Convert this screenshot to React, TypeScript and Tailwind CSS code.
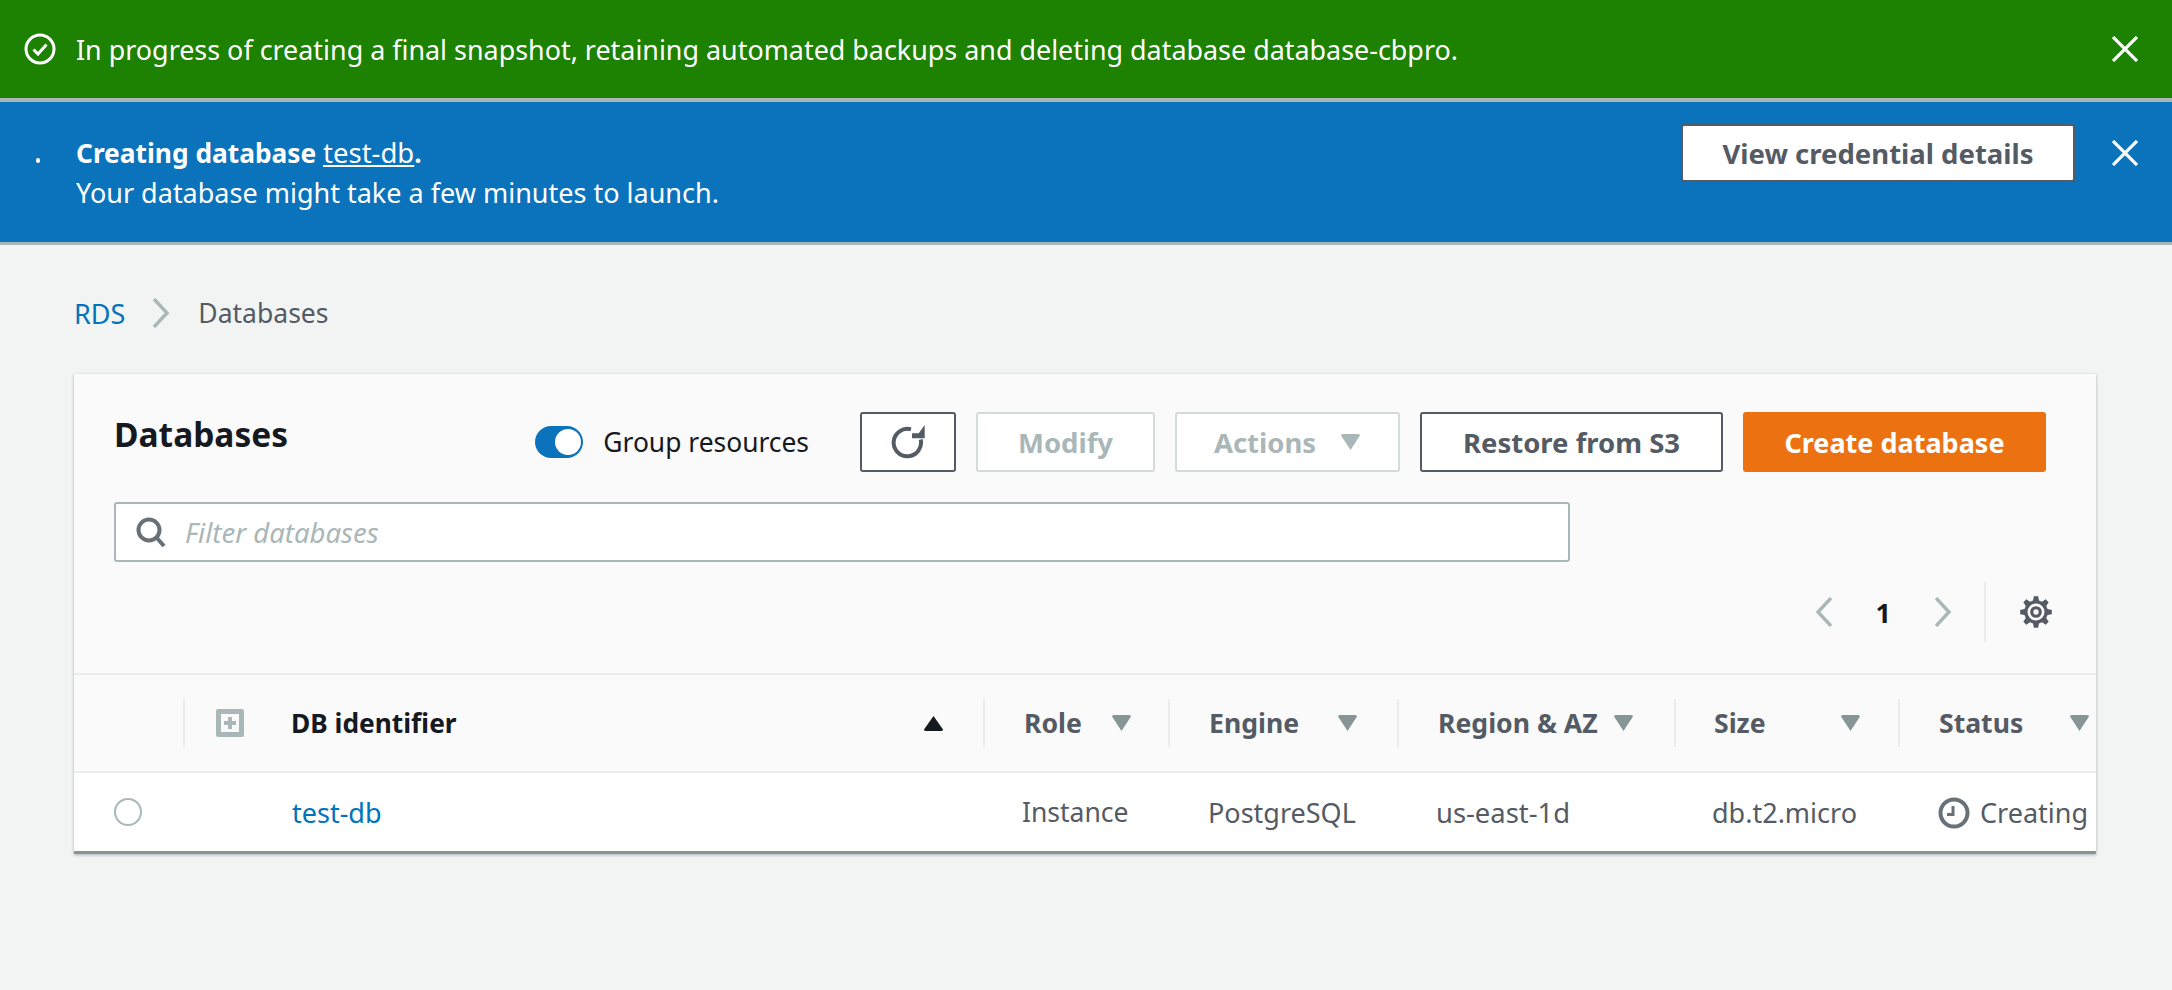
import React from "react";

const X = () => (
  <svg viewBox="0 0 26 26" className="w-[26px] h-[26px]" fill="none" stroke="#ffffff" strokeWidth="3.2">
    <path d="M1 1L25 25M25 1L1 25" />
  </svg>
);

const Tri = ({ up = false, color = "#879596", className = "" }: { up?: boolean; color?: string; className?: string }) => (
  <svg viewBox="0 0 21 16" className={`w-[21px] h-[16px] shrink-0 ${className}`}>
    <path d={up ? "M10.5 1L1 14.5Q1 16 3 16H18Q20 16 20 14.5Z" : "M10.5 16L1 1.5Q1 0 3 0H18Q20 0 20 1.5Z"} fill={color} />
  </svg>
);

const Chevron = ({ left = false, color = "#aab7b8" }: { left?: boolean; color?: string }) => (
  <svg viewBox="0 0 18 30" className="w-[18px] h-[30px] shrink-0" fill="none" stroke={color} strokeWidth="3.4">
    <path d={left ? "M16 1L3 15L16 29" : "M2 1L15 15L2 29"} />
  </svg>
);

const gearPath = (() => {
  const pts: string[] = [];
  const teeth = 8;
  for (let i = 0; i < teeth; i++) {
    const a = (i * 2 * Math.PI) / teeth;
    const step = (2 * Math.PI) / teeth;
    const list: [number, number][] = [
      [11.2, a - step * 0.32],
      [15, a - step * 0.17],
      [15, a + step * 0.17],
      [11.2, a + step * 0.32],
    ];
    for (const [r, t] of list) {
      pts.push(`${(16 + r * Math.sin(t)).toFixed(2)} ${(16 - r * Math.cos(t)).toFixed(2)}`);
    }
  }
  return "M" + pts.join("L") + "Z";
})();

export default function App() {
  return (
    <div className="min-h-[990px] bg-[#f2f3f3] text-[27px] leading-[39px] text-[#16191f] font-['Noto_Sans','Liberation_Sans',sans-serif]">
      <div className="h-[102px] bg-[#1d8102] border-b-[4px] border-[#aab7b8] flex items-center pl-[24px] pr-[34px] text-white">
        <svg viewBox="0 0 32 32" className="w-[32px] h-[32px] shrink-0" fill="none" stroke="#ffffff" strokeWidth="3">
          <circle cx="16" cy="16" r="14" />
          <path d="M9.5 16.5L14 21L22.5 11.5" />
        </svg>
        <span className="ml-[20px] whitespace-nowrap text-[26.9px]">In progress of creating a final snapshot, retaining automated backups and deleting database database-cbpro.</span>
        <div className="ml-auto"><X /></div>
      </div>

      <div className="h-[143px] bg-[#0b73bb] border-b-[3px] border-[#aab7b8] flex items-center pl-[36px] pr-[34px] text-white">
        <div className="w-[4px] h-[5px] bg-white rounded-full mt-[-24px] shrink-0" />
        <div className="ml-[36px] whitespace-nowrap">
          <div className="font-bold text-[26.3px]">Creating database <a className="font-normal underline text-[27.5px]">test-db</a>.</div>
          <div>Your database might take a few minutes to launch.</div>
        </div>
        <button className="ml-auto w-[394px] h-[58px] mt-[-38px] bg-white border-2 border-[#545b64] rounded-[3px] font-bold text-[27.5px] text-[#545b64]">View credential details</button>
        <div className="ml-[37px] mt-[-38px]"><X /></div>
      </div>

      <div className="px-[74px] pt-[50px]">
        <div className="flex items-center h-[36px] mb-[43px]">
          <a className="text-[#0073bb]">RDS</a>
          <span className="ml-[27px] mr-[28px]"><Chevron /></span>
          <span className="text-[#545b64] text-[26.5px]">Databases</span>
        </div>

        <div className="w-[2022px] bg-[#fafafa] border-b-[3px] border-[#879596] shadow-[0_1px_3px_rgba(0,28,36,0.3)]">
          <div className="pl-[40px] pr-[50px] pt-[38px]">
            <div className="flex items-start h-[60px]">
              <h1 className="font-bold text-[33.5px] leading-[44px]">Databases</h1>
              <div className="ml-auto flex items-center h-[60px]">
                <div className="w-[48px] h-[32px] rounded-full bg-[#0b73bb] flex items-center justify-end pr-[2px]">
                  <div className="w-[26px] h-[26px] rounded-full bg-white" />
                </div>
                <span className="ml-[20px] mr-[51px] text-[26.4px]">Group resources</span>
                <div className="flex gap-[20px] font-bold text-[27.5px]">
                  <button className="w-[96px] h-[60px] bg-white border-2 border-[#545b64] rounded-[3px] flex items-center justify-center">
                    <svg viewBox="0 0 34 34" className="w-[34px] h-[34px]" fill="none" stroke="#545b64" strokeWidth="4">
                      <path d="M29.700 14.500A13.700 13.700 0 1 1 20 4.400" />
                      <path d="M33.700 0L27.700 8.300H21V13.300H33.700Z" fill="#545b64" stroke="none" />
                    </svg>
                  </button>
                  <button className="w-[179px] h-[60px] bg-white border-2 border-[#d5dbdb] rounded-[3px] text-[#aab7b8]">Modify</button>
                  <button className="w-[225px] h-[60px] bg-white border-2 border-[#d5dbdb] rounded-[3px] text-[#aab7b8] flex items-center justify-center gap-[24px]">
                    Actions
                    <Tri color="#aab7b8" />
                  </button>
                  <button className="w-[303px] h-[60px] bg-white border-2 border-[#545b64] rounded-[3px] text-[#545b64]">Restore from S3</button>
                  <button className="w-[303px] h-[60px] bg-[#ec7211] rounded-[3px] text-white text-[27px]">Create database</button>
                </div>
              </div>
            </div>

            <div className="mt-[30px] w-[1456px] h-[60px] bg-white border-2 border-[#aab7b8] rounded-[3px] flex items-center pl-[20px]">
              <svg viewBox="0 0 30 30" className="w-[30px] h-[30px] shrink-0" fill="none" stroke="#687078" strokeWidth="4">
                <circle cx="13" cy="13" r="10.5" />
                <path d="M20 20L28 29" />
              </svg>
              <span className="ml-[19px] italic text-[#aab7b8] text-[27.5px]">Filter databases</span>
            </div>

            <div className="mt-[20px] h-[60px] flex items-center justify-end mr-[-7px]">
              <Chevron left />
              <span className="mx-[43px] font-bold">1</span>
              <Chevron />
              <div className="w-[2px] h-[60px] bg-[#eaeded] ml-[32px] mr-[33px]" />
              <svg viewBox="0 0 32 32" className="w-[34px] h-[34px]">
                <path d={gearPath + "M16 24A8 8 0 1 0 16 8A8 8 0 1 0 16 24Z"} fill="#545b64" fillRule="evenodd" />
                <circle cx="16" cy="16" r="4" fill="none" stroke="#545b64" strokeWidth="3" />
              </svg>
            </div>
          </div>

          <div className="mt-[31px] h-[100px] border-t-2 border-b-2 border-[#eaeded] flex items-center">
            <div className="w-[109px] shrink-0" />
            <div className="w-[800px] shrink-0 flex items-center">
              <div className="h-12 w-full border-l-2 border-[#eaeded] flex items-center pl-[31px]">
                <svg viewBox="0 0 28 28" className="w-[28px] h-[28px] shrink-0">
                  <rect x="0" y="0" width="28" height="28" rx="2" fill="#aab7b8" />
                  <rect x="5" y="5" width="18" height="18" fill="#fafafa" />
                  <path d="M14 8V20M8 14H20" stroke="#aab7b8" strokeWidth="4" />
                </svg>
                <span className="ml-[47px] font-bold text-[26.3px]">DB identifier</span>
                <Tri up color="#16191f" className="ml-auto mr-[39px]" />
              </div>
            </div>
            {[
              ["w-[185px]", "pl-[39px] pr-[36px]", "Role"],
              ["w-[229px]", "pl-[39px] pr-[39px]", "Engine"],
              ["w-[277px]", "pl-[39px] pr-[40px]", "Region & AZ"],
              ["w-[224px]", "pl-[38px] pr-[37px]", "Size"],
              ["w-[198px]", "pl-[39px] pr-[6px]", "Status"],
            ].map(([w, p, label]) => (
              <div key={label} className={`${w} shrink-0 flex items-center`}>
                <div className={`h-12 w-full border-l-2 border-[#eaeded] flex items-center justify-between ${p}`}>
                  <span className="font-bold whitespace-nowrap text-[#545b64] text-[26.6px]">{label}</span>
                  <Tri />
                </div>
              </div>
            ))}
          </div>

          <div className="h-[78px] bg-white flex items-center text-[#545b64] pt-[1px]">
            <div className="w-[109px] shrink-0 pl-[40px]">
              <div className="w-[28px] h-[28px] rounded-full border-2 border-[#aab7b8] bg-white mt-[-2px]" />
            </div>
            <div className="w-[800px] shrink-0 pl-[109px]"><a className="text-[#0073bb]">test-db</a></div>
            <div className="w-[185px] shrink-0 pl-[39px] text-[26.5px]">Instance</div>
            <div className="w-[229px] shrink-0 pl-[40px]">PostgreSQL</div>
            <div className="w-[277px] shrink-0 pl-[39px] text-[27.4px]">us-east-1d</div>
            <div className="w-[224px] shrink-0 pl-[38px]">db.t2.micro</div>
            <div className="w-[198px] shrink-0 pl-[40px] flex items-center gap-[10px] overflow-hidden">
              <svg viewBox="0 0 32 32" className="w-[32px] h-[32px] shrink-0" fill="none" stroke="#687078" strokeWidth="4">
                <circle cx="16" cy="16" r="13.500" />
                <path d="M15 9V17.500H9" strokeWidth="3" />
              </svg>
              Creating
            </div>
          </div>
        </div>
      </div>
    </div>
  );
}
